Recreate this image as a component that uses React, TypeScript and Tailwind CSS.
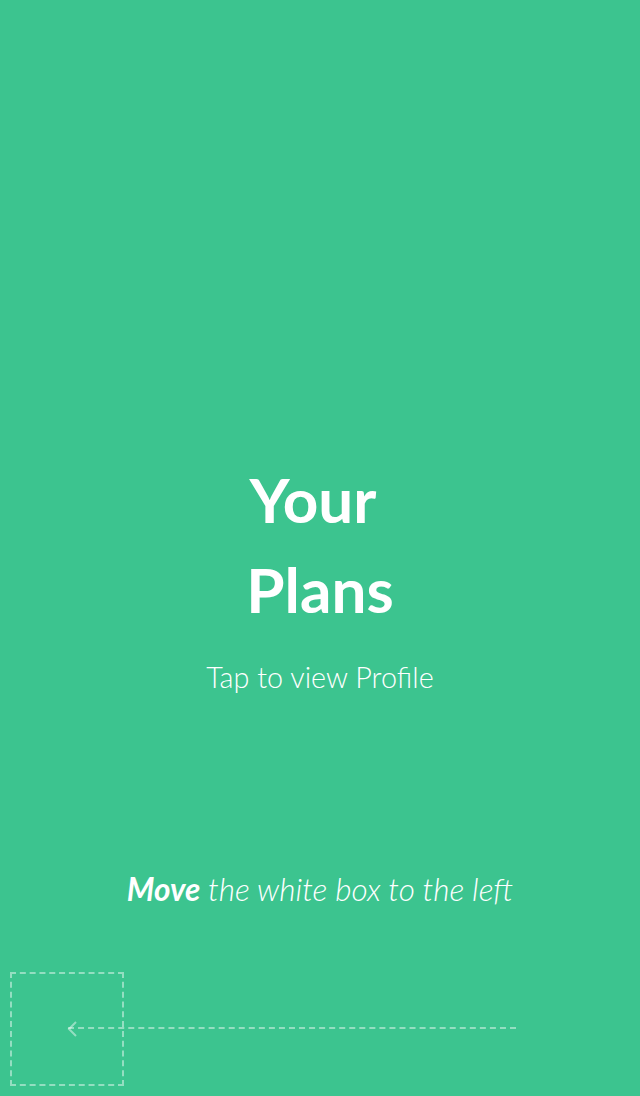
export default function App() {
  return (
    <div
      className="h-[1096px] w-full overflow-hidden bg-[#3cc48f] text-white flex flex-col"
      style={{ fontFamily: 'Lato, "Open Sans", sans-serif' }}
    >
      <div className="pt-[454px] flex flex-col items-center">
        <h1 className="text-[62px] leading-[90px] font-bold text-center">
          <span className="block pr-[14px]">Your</span>
          <span className="block">Plans</span>
        </h1>
        <p className="mt-[26px] text-[28.8px] leading-[1.2] font-light">Tap to view Profile</p>
      </div>

      <div className="mt-[175px] text-center text-[31.5px] leading-[38px] italic font-light">
        <span className="font-bold">Move</span> the white box to the left
      </div>

      <div className="mt-[64px] ml-[10px] relative h-[114px]">
        <div className="w-[114px] h-[114px] border-2 border-dashed border-white/45" />
        <div className="absolute left-[58px] top-[55px] w-[448px] border-t-2 border-dashed border-white/45" />
        <svg className="absolute left-[55px] top-[48px]" width="16" height="18" viewBox="0 0 16 18">
          <path d="M11 2 L4 9 L11 16" fill="none" stroke="rgba(255,255,255,0.45)" strokeWidth="2" />
        </svg>
      </div>
    </div>
  )
}
